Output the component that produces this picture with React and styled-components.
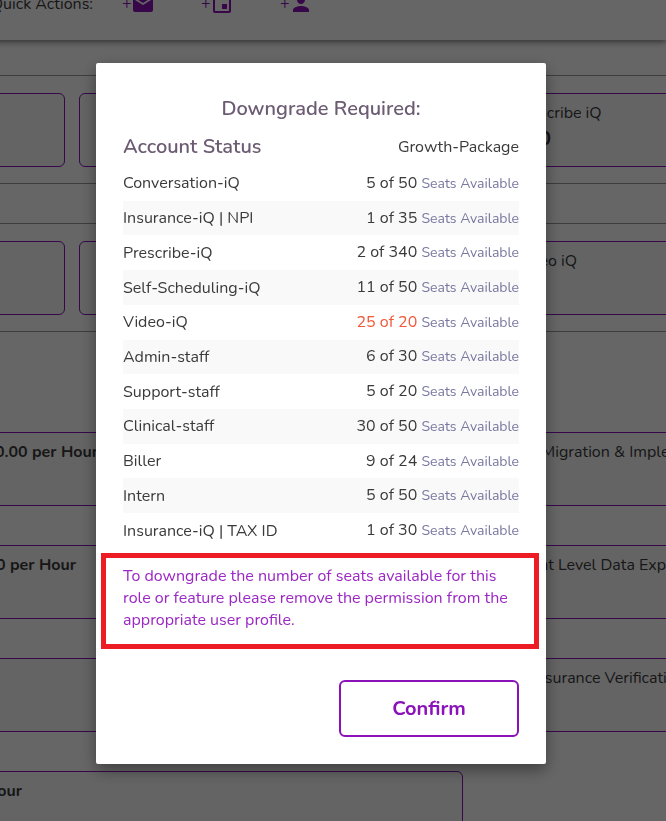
import React from "react";
import styled, { createGlobalStyle, css } from "styled-components";
import { MdMail, MdEvent, MdPerson } from "react-icons/md";

const GlobalStyle = createGlobalStyle`
  * {
    box-sizing: border-box;
  }

  body {
    margin: 0;
    background: #fff;
    color: #3a3a3a;
    font-family: Nunito, Lato, sans-serif;
    font-size: 16px;
    line-height: 22px;
  }
`;

const purple = "#8a12b8";

// Page behind the dialog
const Viewport = styled.div`
  height: 100vh;
  overflow: hidden;
`;

// the page is scrolled right and down, so its first part is out of view
const Scrolled = styled.div`
  margin: -32px 0 0 -335px;
`;

const Toolbar = styled.header`
  display: flex;
  align-items: center;
  gap: 46px;
  height: 72px;
  box-shadow: 0 2px 6px rgba(0, 0, 0, 0.5);
`;

const ToolbarLabel = styled.div`
  width: 428px;
  margin-right: -17px;
  text-align: right;
`;

const QuickAction = styled.button`
  display: flex;
  align-items: center;
  padding: 0;
  border: 0;
  background: none;
  color: ${purple};
  font: inherit;

  svg {
    width: 24px;
    height: 24px;
  }
`;

const Plus = styled.span`
  width: 9px;
  font-size: 16px;
`;

const Section = styled.section`
  display: grid;
  grid-template-columns: repeat(3, 400px);
  gap: 14px;
  margin-top: ${props => (props.first ? "35px" : "39px")};
  padding: 17px 0 16px;
  border-top: 1px solid #999;
  border-bottom: 1px solid #999;
`;

const Services = styled.section`
  display: grid;
  grid-template-columns: repeat(2, 798px);
  gap: 39px 14px;
  margin-top: 100px;
`;

const Card = styled.div`
  height: 74px;
  padding: 8px 21px;
  border: 1px solid ${purple};
  border-radius: 6px;
  background: #fafafa;
  white-space: nowrap;

  ${props => props.inset && css`
    padding-left: 25px;
  `}
`;

const CardValue = styled.div`
  margin-top: 4px;
  font-size: 20px;
  font-weight: bold;
`;

const Rate = styled.div`
  width: ${props => props.width};
  font-weight: bold;
  text-align: right;
`;

// Dialog
const Backdrop = styled.div`
  position: fixed;
  inset: 0;
  display: flex;
  justify-content: center;
  align-items: flex-start;
  padding: 63px 24px 24px 0;
  background: rgba(0, 0, 0, 0.6);
`;

const Dialog = styled.div`
  width: 100%;
  max-width: 450px;
  padding: 34px 27px 27px;
  border-radius: 2px;
  background: #fff;
  box-shadow: 0 6px 16px rgba(0, 0, 0, 0.4);
`;

const Title = styled.h2`
  margin: 0;
  color: #6b5b73;
  font-size: 20px;
  font-weight: 600;
  line-height: 24px;
  text-align: center;
`;

const StatusHeader = styled.div`
  display: flex;
  justify-content: space-between;
  align-items: center;
  margin: 14px 0 7px;
`;

const StatusTitle = styled.h3`
  margin: 0;
  color: #6b5b73;
  font-size: 20px;
  font-weight: 600;
  line-height: 24px;
`;

const SeatTable = styled.table`
  width: 100%;
  height: 382px;
  border-collapse: collapse;
`;

const SeatRow = styled.tr`
  &:nth-child(even) {
    background: #f9f9f9;
  }
`;

const SeatName = styled.th`
  padding: 0;
  font-weight: normal;
  text-align: left;
`;

const SeatCount = styled.td`
  padding: 0;
  text-align: right;
  color: ${props => (props.over ? "#f0583a" : "#3a3a3a")};
`;

const Unit = styled.span`
  color: #7878a0;
  font-size: 14px;
`;

const Notice = styled.p`
  margin: 5px -20px 31px -22px;
  padding: 7px 15px 13px 17px;
  border: 5px solid #ed1c24;
  color: #9b27c4;
`;

const Actions = styled.div`
  display: flex;
  justify-content: flex-end;
`;

const ConfirmButton = styled.button`
  width: 180px;
  height: 57px;
  border: 2px solid ${purple};
  border-radius: 6px;
  background: #fff;
  color: ${purple};
  font: bold 20px Nunito, Lato, sans-serif;
`;

const seats = [
  { name: "Conversation-iQ", used: 5, total: 50 },
  { name: "Insurance-iQ | NPI", used: 1, total: 35 },
  { name: "Prescribe-iQ", used: 2, total: 340 },
  { name: "Self-Scheduling-iQ", used: 11, total: 50 },
  { name: "Video-iQ", used: 25, total: 20 },
  { name: "Admin-staff", used: 6, total: 30 },
  { name: "Support-staff", used: 5, total: 20 },
  { name: "Clinical-staff", used: 30, total: 50 },
  { name: "Biller", used: 9, total: 24 },
  { name: "Intern", used: 5, total: 50 },
  { name: "Insurance-iQ | TAX ID", used: 1, total: 30 },
];

function Seat({ name, used, total }) {
  return (
    <SeatRow>
      <SeatName scope="row">{name}</SeatName>
      <SeatCount over={used > total ? 1 : 0}>
        {used} of {total} <Unit>Seats Available</Unit>
      </SeatCount>
    </SeatRow>
  );
}

function Background() {
  return (
    <Viewport>
      <Scrolled>
        <Toolbar>
          <ToolbarLabel>Quick Actions:</ToolbarLabel>
          <QuickAction aria-label="New message"><Plus>+</Plus><MdMail /></QuickAction>
          <QuickAction aria-label="New event"><Plus>+</Plus><MdEvent /></QuickAction>
          <QuickAction aria-label="New person"><Plus>+</Plus><MdPerson /></QuickAction>
        </Toolbar>
        <Section first={1}>
          <Card />
          <Card />
          <Card>
            Prescribe iQ
            <CardValue>340</CardValue>
          </Card>
        </Section>
        <Section>
          <Card />
          <Card />
          <Card>Video iQ</Card>
        </Section>
        <Services>
          <Card><Rate width="411px">$200.00 per Hour</Rate></Card>
          <Card inset={1}>Data Migration &amp; Implementation</Card>
          <Card><Rate width="389px">$200.00 per Hour</Rate></Card>
          <Card inset={1}>Patient Level Data Export</Card>
          <Card />
          <Card inset={1}>Pro Insurance Verification</Card>
          <Card><Rate width="335px">$200.00 per Hour</Rate></Card>
        </Services>
      </Scrolled>
    </Viewport>
  );
}

export default function App() {
  return (
    <>
      <GlobalStyle />
      <Background />
      <Backdrop>
        <Dialog role="dialog" aria-labelledby="dialog-title">
          <Title id="dialog-title">Downgrade Required:</Title>
          <StatusHeader>
            <StatusTitle>Account Status</StatusTitle>
            <span>Growth-Package</span>
          </StatusHeader>
          <SeatTable>
            <tbody>
              {seats.map(seat => <Seat key={seat.name} {...seat} />)}
            </tbody>
          </SeatTable>
          <Notice>
            To downgrade the number of seats available for this role or feature
            please remove the permission from the appropriate user profile.
          </Notice>
          <Actions>
            <ConfirmButton>Confirm</ConfirmButton>
          </Actions>
        </Dialog>
      </Backdrop>
    </>
  );
}
